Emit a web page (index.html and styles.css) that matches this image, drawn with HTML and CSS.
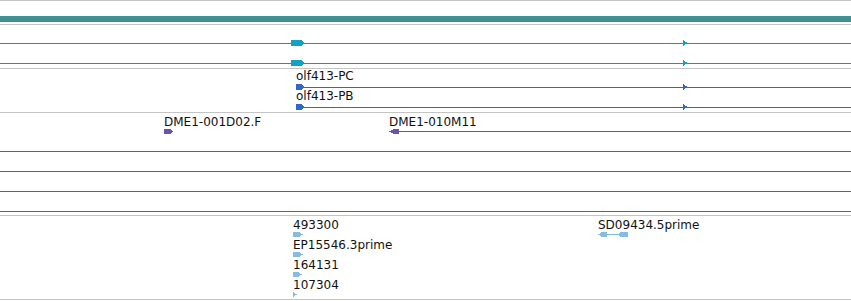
FILE: index.html
```html
<!DOCTYPE html>
<html lang="en">
<head>
  <meta charset="UTF-8" />
  <title>Genome Browser Tracks</title>
  <link rel="stylesheet" href="styles.css">
</head>
<body>
  <div class="browser">
    <!-- overview bar -->
    <div class="track track-overview">
      <div class="scale-bar"></div>
    </div>

    <!-- gene models -->
    <div class="track track-gene">
      <div class="row">
        <svg class="glyph gene" width="851" height="6">
          <line x1="0" y1="3.5" x2="851" y2="3.5"/>
          <polygon class="block" points="291,0 301,0 305,3 301,6 291,6"/>
          <polygon class="block" points="683,0 688,3 683,6"/>
        </svg>
      </div>
      <div class="row">
        <svg class="glyph gene" width="851" height="6">
          <line x1="0" y1="3.5" x2="851" y2="3.5"/>
          <polygon class="block" points="291,0 301,0 305,3 301,6 291,6"/>
          <polygon class="block" points="683,0 688,3 683,6"/>
        </svg>
      </div>
    </div>

    <!-- transcripts -->
    <div class="track track-tx">
      <div class="row">
        <div class="feat" style="left:296px">
          <div class="label">olf413-PC</div>
          <svg class="glyph tx" width="555" height="6">
            <line x1="0" y1="3.5" x2="555" y2="3.5"/>
            <polygon points="0,0 5,0 9,3 5,6 0,6"/>
            <polygon points="387,0 392,3 387,6"/>
          </svg>
        </div>
      </div>
      <div class="row">
        <div class="feat" style="left:296px">
          <div class="label">olf413-PB</div>
          <svg class="glyph tx" width="555" height="6">
            <line x1="0" y1="3.5" x2="555" y2="3.5"/>
            <polygon points="0,0 5,0 9,3 5,6 0,6"/>
            <polygon points="387,0 392,3 387,6"/>
          </svg>
        </div>
      </div>
    </div>

    <!-- clones -->
    <div class="track track-clone">
      <div class="row">
        <div class="feat" style="left:164px">
          <div class="label">DME1-001D02.F</div>
          <svg class="glyph clone" width="10" height="5">
            <polygon points="0,0 6,0 9,2.5 6,5 0,5"/>
          </svg>
        </div>
        <div class="feat" style="left:389px">
          <div class="label">DME1-010M11</div>
          <svg class="glyph clone" width="462" height="5">
            <line x1="0" y1="2.5" x2="462" y2="2.5"/>
            <polygon points="0,2.5 5,0 10,0 10,5 5,5"/>
          </svg>
        </div>
      </div>
      <div class="row">
        <div class="feat" style="left:0">
          <div class="label"></div>
          <svg class="glyph clone" width="851" height="5"><line x1="0" y1="2.5" x2="851" y2="2.5"/></svg>
        </div>
      </div>
      <div class="row">
        <div class="feat" style="left:0">
          <div class="label"></div>
          <svg class="glyph clone" width="851" height="5"><line x1="0" y1="2.5" x2="851" y2="2.5"/></svg>
        </div>
      </div>
      <div class="row">
        <div class="feat" style="left:0">
          <div class="label"></div>
          <svg class="glyph clone" width="851" height="5"><line x1="0" y1="2.5" x2="851" y2="2.5"/></svg>
        </div>
      </div>
      <div class="row">
        <div class="feat" style="left:0">
          <div class="label"></div>
          <svg class="glyph clone" width="851" height="5"><line x1="0" y1="2.5" x2="851" y2="2.5"/></svg>
        </div>
      </div>
    </div>

    <!-- ESTs -->
    <div class="track track-est">
      <div class="row">
        <div class="feat" style="left:293px">
          <div class="label">493300</div>
          <svg class="glyph est" width="10" height="5">
            <polygon points="0,0 6,0 10,2.5 6,5 0,5"/>
          </svg>
        </div>
        <div class="feat" style="left:598px">
          <div class="label">SD09434.5prime</div>
          <svg class="glyph est" width="30" height="5">
            <line x1="9" y1="2.5" x2="21" y2="2.5"/>
            <polygon points="0,2.5 4,0 9,0 9,5 4,5"/>
            <polygon points="19,2.5 23,0 30,0 30,5 23,5"/>
          </svg>
        </div>
      </div>
      <div class="row">
        <div class="feat" style="left:293px">
          <div class="label">EP15546.3prime</div>
          <svg class="glyph est" width="10" height="5">
            <polygon points="0,0 6,0 10,2.5 6,5 0,5"/>
          </svg>
        </div>
      </div>
      <div class="row">
        <div class="feat" style="left:293px">
          <div class="label">164131</div>
          <svg class="glyph est" width="9" height="5">
            <polygon points="0,0 5,0 9,2.5 5,5 0,5"/>
          </svg>
        </div>
      </div>
      <div class="row">
        <div class="feat" style="left:293px">
          <div class="label">107304</div>
          <svg class="glyph est" width="5" height="5">
            <polygon points="0,0 4,2.5 0,5"/>
          </svg>
        </div>
      </div>
    </div>
  </div>
</body>
</html>
```

FILE: styles.css
```css
:root {
  --rule: #c4c4c4;
  --overview: #3f9292;
  --gene-line: #2092a9;
  --gene-block: #14a2c2;
  --tx: #3466c8;
  --clone: #6c54a4;
  --est: #86bce4;
  --text: #111111;
}

* {
  margin: 0;
  padding: 0;
  box-sizing: border-box;
}

body {
  background: #ffffff;
  color: var(--text);
  font-family: "DejaVu Sans", sans-serif;
  font-size: 12px;
}

.browser {
  width: 851px;
  border-top: 1px solid var(--rule);
}

.track {
  border-bottom: 1px solid var(--rule);
  display: flex;
  flex-direction: column;
}

.track-overview {
  padding: 15px 0 2px;
}

.scale-bar {
  height: 6px;
  background: var(--overview);
}

.track-gene {
  padding: 15px 0 2px;
  gap: 14px;
}

.track-gene .row {
  height: 6px;
}

.track-tx {
  padding: 1px 0 2px;
}

.track-tx .row {
  height: 20px;
}

.track-clone {
  padding: 3px 0 1px;
  gap: 2px;
}

.track-est {
  padding: 3px 0 2px;
  gap: 2px;
}

.track-clone .row,
.track-est .row {
  height: 18px;
}

.row {
  position: relative;
}

.feat {
  position: absolute;
  top: 0;
}

.label {
  height: 12px;
  line-height: 12px;
  white-space: nowrap;
}

.glyph {
  display: block;
  shape-rendering: crispEdges;
}

.track-tx .glyph {
  margin-top: 2px;
}

.track-clone .glyph,
.track-est .glyph {
  margin-top: 1px;
}

.gene line {
  stroke: var(--gene-line);
  stroke-width: 1;
}

.gene .block {
  fill: var(--gene-block);
}

.tx line {
  stroke: var(--tx);
}

.tx polygon {
  fill: var(--tx);
}

.clone line {
  stroke: var(--clone);
}

.clone polygon {
  fill: var(--clone);
}

.est line {
  stroke: var(--est);
}

.est polygon {
  fill: var(--est);
}
```
